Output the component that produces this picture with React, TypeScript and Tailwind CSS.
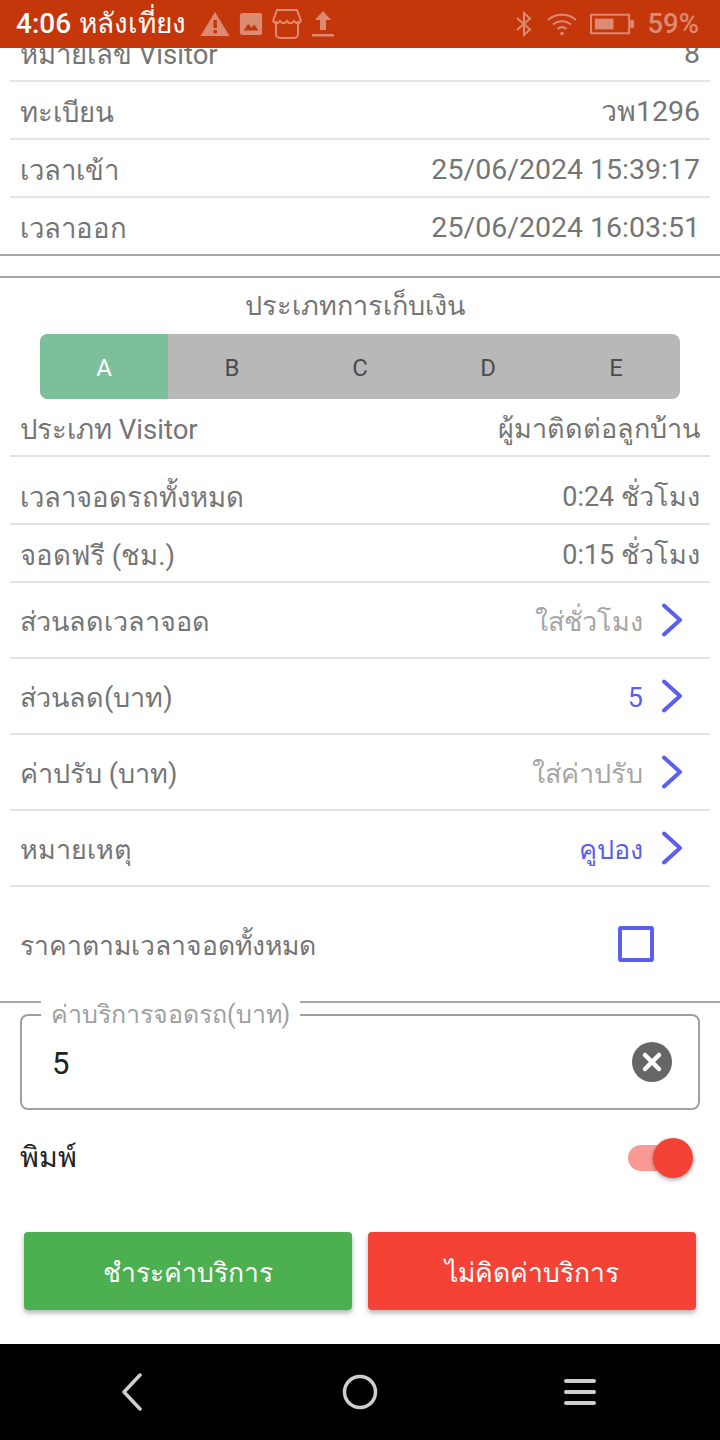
import React from 'react'

const font = "font-['Roboto','Noto_Sans','DejaVu_Sans',sans-serif]"

function InfoRow({ label, value, digits, className = 'h-[58px] mx-[10px] px-[10px] pt-[5px] border-b-2 border-[#e4e4e4]' }: { label: string; value: string; digits?: boolean; className?: string }) {
  return (
    <div className={`flex shrink-0 items-center justify-between text-[27.500px] text-[#757575] ${className}`}>
      <span>{label}</span>
      <span className={digits ? 'text-[28.500px]' : 'text-[27px]'}>{value}</span>
    </div>
  )
}

function Chevron() {
  return (
    <svg width="22" height="34" viewBox="0 0 22 34" fill="none" className="ml-[18px]">
      <path d="M3 2.500 19 17 3 31.500" stroke="#5a5ff0" strokeWidth="4" strokeLinecap="round" strokeLinejoin="round" />
    </svg>
  )
}

function LinkRow({ label, value, active }: { label: string; value: string; active?: boolean }) {
  return (
    <div className="mx-[10px] flex h-[76px] shrink-0 items-center justify-between border-b-2 border-[#e4e4e4] pl-[10px] pr-[27px] text-[27px] text-[#757575]">
      <span className="pt-[5px]">{label}</span>
      <span className="flex items-center">
        <span className={`pt-[5px] ${active ? 'text-[#5a5ff0]' : 'text-[#a6a6a6]'}`}>{value}</span>
        <Chevron />
      </span>
    </div>
  )
}

function StatusBar() {
  return (
    <div className="relative z-10 flex h-12 shrink-0 items-center justify-between bg-[#c4370b] pl-4 pr-[21px]">
      <div className="flex items-center">
        <span className="text-[28px] font-medium text-white">4:06</span>
        <span className="ml-[8px] text-[28px] text-white">หลังเที่ยง</span>
        <svg width="30" height="26" viewBox="0 0 30 26" className="ml-[14px]">
          <path d="M15 1 29.500 25H.5Z" fill="#dc8a72" />
          <rect x="13.500" y="9" width="3.400" height="8" fill="#c4370b" />
          <rect x="13.500" y="19" width="3.400" height="3.400" fill="#c4370b" />
        </svg>
        <svg width="24" height="24" viewBox="0 0 26 26" className="ml-[9px]">
          <rect x="1" y="1" width="24" height="24" rx="2.500" fill="#dc8a72" />
          <path d="M5 20 10 13l3.500 4 3-3.500L21 20Z" fill="#c4370b" />
        </svg>
        <svg width="32" height="32" viewBox="0 0 32 32" fill="none" className="ml-[8px]" stroke="#dc8a72" strokeWidth="2">
          <path d="M5 13v13a4 4 0 0 0 4 4h14a4 4 0 0 0 4-4V13" />
          <path d="M6 2h20l4 11c-2 3-5 3-7 0-2 3-5 3-7 0-2 3-5 3-7 0-2 3-5 3-7 0Z" />
        </svg>
        <svg width="22" height="28" viewBox="0 0 22 28" className="ml-[9px]">
          <path d="M11 1 19 10H14V20H8V10H3Z" fill="#dc8a72" />
          <rect x="0" y="24" width="22" height="2.500" fill="#dc8a72" />
        </svg>
      </div>
      <div className="flex items-center">
        <svg width="18" height="26" viewBox="0 0 18 26" fill="none" stroke="#dc8a72" strokeWidth="2">
          <path d="M2 7 15 18.500 9 24V2l6 5.500L2 19" />
        </svg>
        <svg width="30" height="24" viewBox="0 0 30 24" fill="none" stroke="#dc8a72" strokeWidth="2" className="ml-[14px]">
          <path d="M1 8c8-7 20-7 28 0M6 12.500c5-4.500 13-4.500 18 0M10.500 17c3-2.500 6-2.500 9 0" />
          <circle cx="15" cy="21.500" r="1.800" fill="#dc8a72" stroke="none" />
        </svg>
        <svg width="45" height="22" viewBox="0 0 46 22" fill="none" className="ml-[13px]">
          <rect x="1" y="1.500" width="39" height="19" stroke="#dc8a72" strokeWidth="2" />
          <rect x="5" y="5.500" width="19" height="11" fill="#dc8a72" />
          <rect x="41" y="7" width="4" height="8" fill="#dc8a72" />
        </svg>
        <span className="ml-[12px] text-[27.500px] font-medium text-[#dc8a72]">59%</span>
      </div>
    </div>
  )
}

export default function App() {
  const tabs = ['A', 'B', 'C', 'D', 'E']

  return (
    <div className={`flex h-[1440px] w-[720px] flex-col overflow-hidden bg-white ${font}`}>
      <StatusBar />

      <div className="flex min-h-0 flex-1 flex-col overflow-hidden">
        <InfoRow label="หมายเลข Visitor" value="8" digits className="-mt-[24px] h-[58px] mx-[10px] px-[10px] pt-[5px] border-b-2 border-[#e4e4e4]" />
        <InfoRow label="ทะเบียน" value="วพ1296" digits />
        <InfoRow label="เวลาเข้า" value="25/06/2024 15:39:17" digits />
        <InfoRow label="เวลาออก" value="25/06/2024 16:03:51" digits className="h-[58px] px-5 pt-[5px] border-b-2 border-[#a8a8a8]" />

        <div className="mt-5 border-t-2 border-[#a8a8a8] pr-[10px] pt-[11px] text-center text-[27px] leading-[34px] text-[#757575]">ประเภทการเก็บเงิน</div>

        <div className="mx-10 mt-[11px] flex h-[65px] shrink-0 overflow-hidden rounded-lg bg-[#b8b8b8] text-[24px]">
          {tabs.map((t, i) => (
            <div key={t} className={`flex flex-1 items-center justify-center pt-[2px] ${i === 0 ? 'bg-[#7bbf9b] text-white' : 'text-[#4d4d4d]'}`}>
              {t}
            </div>
          ))}
        </div>

        <InfoRow label="ประเภท Visitor" value="ผู้มาติดต่อลูกบ้าน" className="h-[58px] mx-[10px] px-[10px] pt-[5px] border-b-2 border-[#e4e4e4]" />
        <InfoRow label="เวลาจอดรถทั้งหมด" value="0:24 ชั่วโมง" className="h-[68px] mx-[10px] px-[10px] pt-[15px] border-b-2 border-[#e4e4e4]" />
        <InfoRow label="จอดฟรี (ชม.)" value="0:15 ชั่วโมง" />
        <LinkRow label="ส่วนลดเวลาจอด" value="ใส่ชั่วโมง" />
        <LinkRow label="ส่วนลด(บาท)" value="5" active />
        <LinkRow label="ค่าปรับ (บาท)" value="ใส่ค่าปรับ" />
        <LinkRow label="หมายเหตุ" value="คูปอง" active />

        <div className="flex h-[116px] shrink-0 items-center justify-between border-b-2 border-[#a8a8a8] pl-5 pr-[66px] text-[26.500px] text-[#757575]">
          <span className="pt-[3px]">ราคาตามเวลาจอดทั้งหมด</span>
          <span className="h-9 w-9 rounded-[3px] border-4 border-[#5a5ff0]" />
        </div>

        <div className="relative mx-5 mt-[11px] flex h-[96px] shrink-0 items-center justify-between rounded-lg border-2 border-[#a0a0a0] pl-[30px] pr-[26px]">
          <span className="absolute -top-[16px] left-[19px] bg-white px-[10px] text-[25px] leading-[30px] text-[#a0a0a0]">ค่าบริการจอดรถ(บาท)</span>
          <span className="pt-[4px] text-[31px] text-[#222222]">5</span>
          <svg width="40" height="40" viewBox="0 0 40 40">
            <circle cx="20" cy="20" r="20" fill="#666666" />
            <path d="M13 13 27 27M27 13 13 27" stroke="white" strokeWidth="4.500" strokeLinecap="round" />
          </svg>
        </div>

        <div className="mt-[24px] flex h-12 shrink-0 items-center justify-between pl-5 pr-[34px]">
          <span className="text-[28.500px] font-medium text-[#222222]">พิมพ์</span>
          <span className="relative h-[26px] w-[58px] rounded-full bg-[#fb9a94]">
            <span className="absolute -top-[7px] right-[-7px] h-10 w-10 rounded-full bg-[#f44336] shadow-[0_2px_4px_rgba(0,0,0,0.35)]" />
          </span>
        </div>

        <div className="mt-[50px] flex shrink-0 gap-4 px-6 text-[26.500px] text-white">
          <div className="flex h-[78px] flex-1 items-center justify-center rounded bg-[#4caf50] pt-[4px] shadow-[0_3px_5px_rgba(0,0,0,0.3)]">ชำระค่าบริการ</div>
          <div className="flex h-[78px] flex-1 items-center justify-center rounded bg-[#f44336] pt-[4px] shadow-[0_3px_5px_rgba(0,0,0,0.3)]">ไม่คิดค่าบริการ</div>
        </div>
      </div>

      <div className="flex h-24 shrink-0 items-center bg-black">
        <div className="flex w-[240px] justify-center pl-[24px]">
          <svg width="24" height="38" viewBox="0 0 24 38" fill="none">
            <path d="M20 2 4 19l16 17" stroke="#cfcfcf" strokeWidth="3.500" strokeLinecap="round" strokeLinejoin="round" />
          </svg>
        </div>
        <div className="flex w-[240px] justify-center">
          <svg width="36" height="36" viewBox="0 0 36 36" fill="none">
            <circle cx="18" cy="18" r="15.500" stroke="#cfcfcf" strokeWidth="3.500" />
          </svg>
        </div>
        <div className="flex w-[240px] justify-center pr-[40px]">
          <svg width="32" height="28" viewBox="0 0 32 28" fill="none" stroke="#cfcfcf" strokeWidth="4" strokeLinecap="round">
            <path d="M2 3h28M2 14h28M2 25h28" />
          </svg>
        </div>
      </div>
    </div>
  )
}
